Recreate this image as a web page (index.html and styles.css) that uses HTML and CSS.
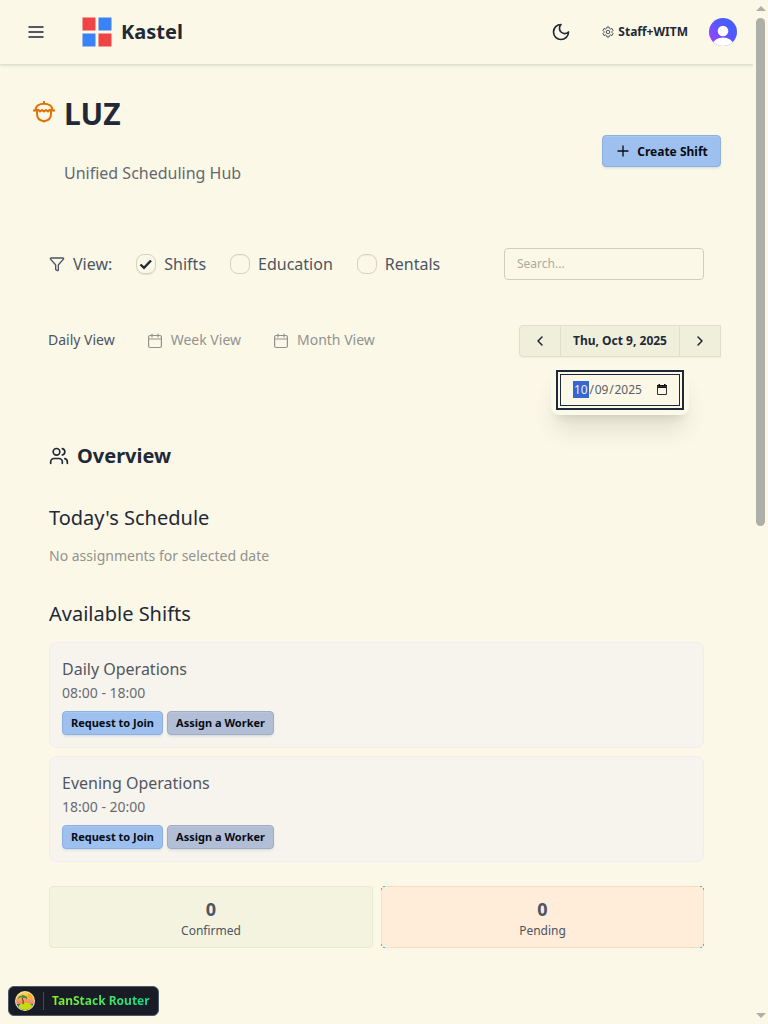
FILE: index.html
```html
<!DOCTYPE html>
<html lang="en">
<head>
<meta charset="utf-8">
<title>Kastel</title>
<link rel="stylesheet" href="styles.css">
</head>
<body>
<div class="page">
  <header class="navbar">
    <svg class="menu" width="20" height="20" viewBox="0 0 20 20"><path d="M2.5 5h15M2.5 10h15M2.5 15h15"/></svg>
    <svg class="logo" width="30" height="30" viewBox="0 0 30 30"><path fill="#ef4444" d="M.5.5h13v13H.5zM16.500 16.500h13v13h-13z"/><path fill="#3b82f6" d="M16.500.5h13v13h-13zM.5 16.500h13v13H.5z"/></svg>
    <span class="brand">Kastel</span>
    <svg class="moon line" width="20" height="20" viewBox="0 0 24 24"><path d="M12 3a6 6 0 0 0 9 9 9 9 0 1 1-9-9Z"/></svg>
    <div class="role">
      <svg class="gear" width="12" height="12" viewBox="0 0 24 24"><path d="M10 2h4l1 3 2 1 3-1 2 4-2 2v2l2 2-2 4-3-1-2 1-1 3h-4l-1-3-2-1-3 1-2-4 2-2v-2L2 9l2-4 3 1 2-1z"/><circle cx="12" cy="12" r="3.500"/></svg>
      <span>Staff+WITM</span>
    </div>
    <svg class="avatar" width="28" height="28" viewBox="0 0 28 28"><defs><linearGradient id="av" x1="0" y1="1" x2="1" y2="0"><stop offset=".12" stop-color="#9c45ff"/><stop offset=".55" stop-color="#5656ff"/><stop offset="1" stop-color="#3b63ff"/></linearGradient><clipPath id="round"><circle cx="14" cy="14" r="14"/></clipPath></defs><g clip-path="url(#round)"><path fill="url(#av)" d="M0 0h28v28H0z"/><circle cx="14" cy="13" r="5.300" fill="#fff"/><ellipse cx="14" cy="26" rx="10" ry="6.500" fill="#fff"/></g></svg>
  </header>

  <main class="main">
    <section class="hero">
      <svg class="acorn" width="24" height="24" viewBox="0 0 24 24"><path d="M12 1v3M1 10.500h3.500M19.500 10.500H23M3.500 10.500C3.500 6 7.500 3.700 12 3.700s8.500 2.300 8.500 6.800M4 10.500l2.200-.8L8 11.500l2-1.500 2 1.500 2-1.500 2 1.500 1.800-1.800 2.200.8M5 11v3c0 4 3 6.700 7 7.300 4-.6 7-3.300 7-7.300v-3M12 21v1.500"/></svg>
      <div class="titles"><h1>LUZ</h1><p>Unified Scheduling Hub</p></div>
      <button class="btn create"><svg class="line" width="16" height="16" viewBox="0 0 24 24"><path d="M4.500 12h15M12 4.500v15"/></svg>Create Shift</button>
    </section>

    <section class="panel filters">
      <svg class="line funnel" width="16" height="16" viewBox="0 0 24 24"><path d="M10 20a1 1 0 0 0 .55.9l2 1A1 1 0 0 0 14 21v-7a2 2 0 0 1 .52-1.340L21.740 4.670A1 1 0 0 0 21 3H3a1 1 0 0 0-.74 1.670l7.220 7.990A2 2 0 0 1 10 14z"/></svg>
      <span class="view">View:</span>
      <span class="check on"><svg width="20" height="20" viewBox="0 0 20 20"><path d="M4.500 10.500l3.500 3.300 7-7.300"/></svg></span><span class="opt shifts">Shifts</span>
      <span class="check"></span><span class="opt edu">Education</span>
      <span class="check"></span><span class="opt">Rentals</span>
      <input class="search" type="text" placeholder="Search...">
    </section>

    <section class="tabs">
      <span class="tab active">Daily View</span>
      <span class="tab week"><svg class="line" width="14" height="16" viewBox="0 0 14 16"><path d="M4 1v3M10 1v3M.6 6h12.800"/><rect x=".6" y="2.500" width="12.800" height="12" rx="1.500"/></svg>Week View</span>
      <span class="tab month"><svg class="line" width="14" height="16" viewBox="0 0 14 16"><path d="M4 1v3M10 1v3M.6 6h12.800"/><rect x=".6" y="2.500" width="12.800" height="12" rx="1.500"/></svg>Month View</span>
      <div class="datenav">
        <span class="arrow"><svg class="line" width="16" height="16" viewBox="0 0 24 24"><path d="m15 18-6-6 6-6"/></svg></span>
        <span class="day">Thu, Oct 9, 2025</span>
        <span class="arrow"><svg class="line" width="16" height="16" viewBox="0 0 24 24"><path d="m9 18 6-6-6-6"/></svg></span>
        <div class="popover"><div class="dateinput"><span class="sel">10</span><i>/</i><span>09</span><i>/</i><span class="year">2025</span>
          <svg width="12" height="12" viewBox="0 0 12 12"><path fill="#111" d="M1 1h10v3H1zM2.500 0h1.500v2H2.500zM8 0h1.500v2H8z"/><path fill="none" stroke="#33332f" d="M1.500 2.500h9v8h-9z"/></svg></div></div>
      </div>
    </section>

    <section class="panel overview">
      <h2><svg class="line" width="20" height="20" viewBox="0 0 24 24"><path d="M16 21v-2a4 4 0 0 0-4-4H6a4 4 0 0 0-4 4v2M16 3.130a4 4 0 0 1 0 7.750M22 21v-2a4 4 0 0 0-3-3.870"/><circle cx="9" cy="7" r="4"/></svg><span>Overview</span></h2>
      <h3 class="today">Today's Schedule</h3>
      <p class="empty">No assignments for selected date</p>
      <h3 class="avail">Available Shifts</h3>
      <article class="shift"><h4>Daily Operations</h4><p>08:00 - 18:00</p><div class="actions"><button class="btn small">Request to Join</button><button class="btn small assign">Assign a Worker</button></div></article>
      <article class="shift"><h4>Evening Operations</h4><p>18:00 - 20:00</p><div class="actions"><button class="btn small">Request to Join</button><button class="btn small assign">Assign a Worker</button></div></article>
      <div class="stats">
        <div class="stat confirmed"><b>0</b><span>Confirmed</span></div>
        <div class="stat pending"><b>0</b><span>Pending</span>
          <svg class="corner tl" width="5" height="5"><path d="M2 0h2v1H2zM0 2h1v2H0z"/></svg><svg class="corner tr" width="5" height="5"><path d="M2 0h2v1H2zM0 2h1v2H0z"/></svg><svg class="corner bl" width="5" height="5"><path d="M2 0h2v1H2zM0 2h1v2H0z"/></svg><svg class="corner br" width="5" height="5"><path d="M2 0h2v1H2zM0 2h1v2H0z"/></svg>
        </div>
      </div>
    </section>
    <section class="panel next"></section>
  </main>
</div>

<aside class="scrollbar"><span class="up"></span><span class="thumb"></span><span class="down"></span></aside>

<div class="devtools">
  <svg width="20" height="20" viewBox="0 0 20 20"><defs><linearGradient id="sky" x1="0" y1="0" x2="0" y2="1"><stop offset="0" stop-color="#ffe052"/><stop offset=".65" stop-color="#f6806a"/></linearGradient><clipPath id="isle"><circle cx="10" cy="10" r="9"/></clipPath></defs><circle cx="10" cy="10" r="10" fill="#f5e6a0"/><g clip-path="url(#isle)"><path fill="url(#sky)" d="M0 0h20v20H0z"/><circle cx="16" cy="4" r="3" fill="#ffad20"/><path fill="#087f9c" d="M0 13h20v7H0z"/><ellipse cx="10.500" cy="16.500" rx="7" ry="5" fill="#c6d912"/><path d="M7 7q2 3 1 6" stroke="#783f20" stroke-width="1.200" fill="none"/><path fill="#3c9238" d="M7.500 7Q5 5 3.500 8.500q-1-4 2.500-3.500 2-2 4 0 3 0 2 3.500-2-2.500-4-1.500z"/></g></svg>
  <span class="sep"></span><span class="router">TanStack Router</span>
</div>
</body>
</html>
```
FILE: styles.css
```css
* { box-sizing: border-box; }
body { margin: 0; width: 768px; height: 1024px; overflow: hidden; display: flex; position: relative; background: #fcf8e7; color: #1f2937; font-family: "Noto Sans", sans-serif; }
h1, h2, h3, h4, p { margin: 0; font-weight: 400; }
svg { display: block; flex: none; }
.line { fill: none; stroke: currentColor; stroke-width: 2; stroke-linecap: round; stroke-linejoin: round; }
.page { width: 753px; height: 1024px; overflow: hidden; }
.navbar { height: 65px; display: flex; align-items: center; padding: 0 16px 1px 26px; border-bottom: 1px solid #dee2ce; box-shadow: 0 1px 3px #0000001a; }
.menu { fill: none; stroke: #515866; stroke-width: 1.800; }
.logo { margin-left: 36px; }
.brand { margin-left: 9px; font-size: 20px; font-weight: 700; }
.moon { margin-left: auto; }
.role { margin-left: 31px; display: flex; align-items: center; gap: 4px; font-size: 12px; font-weight: 700; }
.gear { fill: none; stroke: #474e57; stroke-width: 2; stroke-linejoin: round; }
.avatar { margin-left: 21px; }

.main { padding: 0 32px; }
.hero { height: 166px; display: flex; align-items: flex-start; }
.acorn { margin-top: 35px; fill: none; stroke: #e17100; stroke-width: 2; stroke-linejoin: round; }
.titles { margin: 31px 0 0 8px; }
h1 { font-size: 30px; line-height: 36px; font-weight: 700; }
.titles p { margin-top: 29px; font-size: 16px; line-height: 24px; color: #636971; }
.btn { border: 1px solid #8db0dd; border-radius: 4px; background: #9dc0ef; color: #080c12; font: 700 12px "Noto Sans", sans-serif; box-shadow: 0 2px 3px -1px #6f9dd855, inset 0 1px #a9c8f1; display: flex; align-items: center; justify-content: center; padding: 0; }
.create { width: 119px; height: 32px; margin: 70px 0 0 auto; gap: 6px; }

.panel { border: 1px solid #fafae6; border-radius: 8px; }
.filters { height: 66px; display: flex; align-items: center; padding: 0 16px; font-size: 16px; color: #4b5563; }
.view { margin: 0 24px 0 8px; }
.check { width: 20px; height: 20px; border: 1px solid #d4d2c5; border-radius: 8px; box-shadow: inset 0 1px 1px #0000000a; flex: none; }
.check.on { box-shadow: 0 1px 1px #00000018; }
.check svg { margin: -1px; fill: none; stroke: #1f2937; stroke-width: 2.400; }
.opt { margin: 0 24px 0 8px; }
.search { width: 200px; height: 32px; margin-left: auto; border: 1px solid #cecdc1; border-radius: 4px; background: transparent; padding: 0 12px 1px; font: 12px "Noto Sans", sans-serif; outline: none; }
.search::placeholder { color: #aaaba4; opacity: 1; }

.tabs { height: 32px; margin-top: 28px; display: flex; padding-left: 16px; font-size: 14px; line-height: 30px; color: #91938f; }
.active { color: #4b5563; }
.tab { display: flex; align-items: center; gap: 9px; height: 30px; }
.tab svg { margin-top: 2px; stroke-width: 1.200; }
.week, .month { margin-left: 33px; }
.datenav { position: relative; margin-left: auto; width: 202px; height: 32px; display: flex; border: 1px solid #dfdfcf; border-radius: 4px 0 0 4px; background: #f0efdc; color: #1f2937; box-shadow: 0 1px 2px #0000000a; }
.arrow { flex: 1; display: flex; align-items: center; justify-content: center; }
.arrow svg { stroke-width: 2.300; }
.day { width: 120px; text-align: center; font-size: 12px; font-weight: 700; border: solid #dfdfcf; border-width: 0 1px; }
.popover { position: absolute; left: 31px; top: 40px; width: 138px; height: 49px; padding: 8px 9px; border-radius: 8px; background: #fbf9e7; box-shadow: 0 20px 25px -5px #0000001a, 0 8px 10px -6px #0000001a; z-index: 2; }
.dateinput { height: 32px; border: 1px solid #1f2937; outline: 2px solid #1f2937; outline-offset: 2px; display: flex; align-items: center; padding: 0 11px 1px 12px; background: #fcf8e7; font-size: 12px; line-height: 17px; color: #5b6067; }
.dateinput i { font-style: normal; width: 6px; text-align: center; }
.sel { background: #3367d1; color: #e9efff; padding: 0 1px; }
.dateinput svg { margin: 1px 0 0 auto; }

.overview { height: 580px; margin-top: 28px; padding: 0 16px; }
h2 { height: 28px; margin-top: 56px; display: flex; align-items: center; gap: 8px; font-size: 20px; font-weight: 700; }
h2 span { padding-bottom: 2px; }
h3 { font-size: 20px; line-height: 28px; }
.today { margin-top: 34px; }
.empty { margin-top: 14px; font-size: 14px; line-height: 20px; color: #91938f; }
.avail { margin: 34px 0 14px; }
.shift { height: 106px; border: 1px solid #eeeef1; border-radius: 8px; background: #f7f4ed; padding: 14px 12px 12px; margin-bottom: 8px; color: #505762; }
h4 { font-size: 16px; line-height: 24px; }
.shift p { margin-top: 2px; font-size: 14px; line-height: 20px; color: #666c74; }
.actions { display: flex; gap: 4px; margin-top: 8px; }
.small { width: 101px; height: 24px; font-size: 11px; padding-bottom: 1px; }
.assign { width: 107px; background: #b2bdd6; border-color: #a0acc5; box-shadow: 0 2px 3px -1px #8292b255, inset 0 1px #bac5dc; }
.stats { margin-top: 24px; display: grid; grid-template-columns: 324px 323px; gap: 8px; }
.stat { position: relative; height: 62px; border: 1px solid #e7ebd2; border-radius: 4px; background: #f4f3df; display: flex; flex-direction: column; align-items: center; color: #4b5563; padding-top: 8px; }
.stat b { font-size: 18px; line-height: 28px; }
.stat span { font-size: 12px; line-height: 16px; }
.pending { background: #ffecd9; border-color: #ffdcc0; }
.corner { position: absolute; fill: #20d9c0; shape-rendering: crispEdges; }
.tl { left: -1px; top: -1px; }
.tr { right: -1px; top: -1px; transform: scaleX(-1); }
.bl { left: -1px; bottom: -1px; transform: scaleY(-1); }
.br { right: -1px; bottom: -1px; transform: scale(-1); }
.next { height: 80px; margin-top: 24px; }

.scrollbar { width: 15px; height: 1024px; display: flex; flex-direction: column; align-items: center; padding: 6px 0; }
.up, .down { border: 5px solid transparent; border-top-width: 0; border-bottom-color: #aeafa9; }
.thumb { width: 9px; height: 508px; margin-top: 7px; border-radius: 5px; background: #aeafa9; }
.down { margin-top: auto; transform: rotate(180deg); }

.devtools { position: absolute; left: 8px; top: 986px; width: 151px; height: 30px; display: flex; align-items: center; padding-left: 6px; border: 1px solid #4b596d; border-radius: 6px; background: #191c24; }
.sep { width: 1px; height: 18px; margin: 0 8px; background: #414b5b; }
.router { padding-bottom: 2px; font-size: 12px; font-weight: 700; color: transparent; background: linear-gradient(90deg, #84f12e, #10df91); background-clip: text; -webkit-background-clip: text; }
```
